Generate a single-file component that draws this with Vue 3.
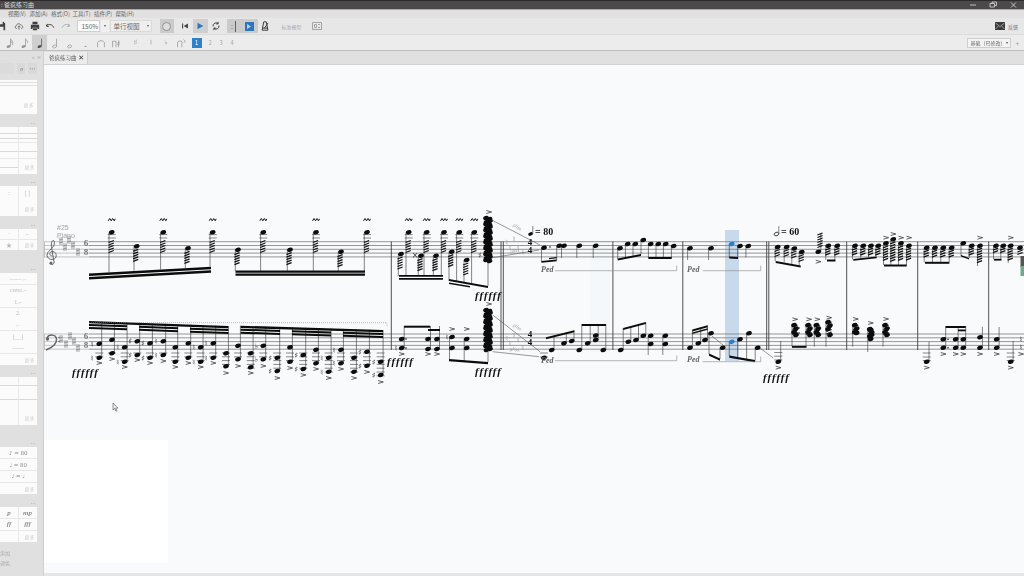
<template>
  <div class="app">
    <header class="titlebar">
      <span class="title">: 爸疯练习曲</span>
      <span class="win-btns">
        <svg viewBox="0 0 60 8" width="60" height="8"><path d="M12 4h6M32 2.500h4.500v3.500h-4.500zM34 2.500v-1.500h4.500v3.500h-2M53 1.500l5 5M58 1.500l-5 5" /></svg>
      </span>
    </header>

    <nav class="menubar">
      <span v-for="m in menus" :key="m" class="menu-item">{{ m }}</span>
    </nav>

    <div class="toolbar tb-main">
      <button class="tb-btn save">
        <svg viewBox="0 0 12 12"><path class="solid" d="M1 1h8l2 2v8H1zM3 1v3h5V1zM3 7v4h6V7z" fill-rule="evenodd" /></svg>
      </button>
      <button class="tb-btn">
        <svg viewBox="0 0 12 12"><path class="line" d="M3.500 9H3C1 9 .8 6 2.800 5.600C3 3 7 2.500 8 4.800C10.500 4.800 11.500 8.500 9 9H8.500M6 10.500V6M4.300 7.500L6 5.800l1.700 1.700" /></svg>
      </button>
      <button class="tb-btn">
        <svg viewBox="0 0 12 12"><path class="solid" d="M3 1h6v3H3zM1 4.500h10v5H9V8H3v1.500H1zM3.500 8.800h5V11h-5z" /></svg>
      </button>
      <button class="tb-btn">
        <svg viewBox="0 0 12 12"><path class="line thick" d="M3 3.500L1.500 6l3 .8M2 5.800C5 3 9 4 10.500 8" /></svg>
      </button>
      <button class="tb-btn off">
        <svg viewBox="0 0 12 12"><path class="line thick" d="M9 3.500L10.500 6l-3 .8M10 5.800C7 3 3 4 1.500 8" /></svg>
      </button>
      <div class="zoom-input">150%</div>
      <div class="zoom-arrow"><i class="caret"></i></div>
      <div class="view-combo"><span>单行视图</span><i class="caret"></i></div>
      <button class="round-btn"><i class="ring"></i></button>
      <button class="tb-btn small skip">
        <svg viewBox="0 0 12 12"><path class="solid" d="M2.500 3h1.300v6H2.500zM9.500 3v6L4.500 6z" /></svg>
      </button>
      <button class="tb-btn play">
        <svg viewBox="0 0 12 12"><path class="blue" d="M3 2l7 4-7 4z" /></svg>
      </button>
      <button class="tb-btn loop">
        <svg viewBox="0 0 12 12"><path class="line thick" d="M2.500 6.500A3.600 3.600 0 0 1 8.500 3.200M9.500 5.500A3.600 3.600 0 0 1 3.500 8.800M8.500 1v2.500H6.300M3.500 11V8.500h2.200" /></svg>
      </button>
      <div class="seg">
        <svg viewBox="0 0 15 13" width="15" height="13"><path class="line" d="M8.500 1v11M5 5v.6M5 8v.6" /></svg>
        <svg viewBox="0 0 15 13" width="15" height="13"><path class="blue" d="M3 2h9v9H3zM5 4v5l4-2.500z" fill-rule="evenodd" /></svg>
      </div>
      <button class="tb-btn small metro">
        <svg viewBox="0 0 12 12"><path class="line thick" d="M4.500 1h3L9.500 11h-7zM3 8.500h6M5.500 8.500L9.500 2.500" /></svg>
      </button>
      <span class="faint-label">标准模型</span>
      <svg class="mixer" viewBox="0 0 10 8" width="10" height="8"><path class="line" d="M.5.500h9v7h-9zM2.500 2.500h2v3h-2zM6 2.500h2M6 5.500h2" /></svg>
      <span class="spacer"></span>
      <svg class="mail" viewBox="0 0 10 8" width="10" height="8"><path d="M0 0h10v8H0z" fill="#3a3a3a" /><path d="M.5 1L5 4.500 9.500 1M.5 7l3-3M9.500 7l-3-3" fill="none" stroke="#ddd" stroke-width=".6" /></svg>
      <span class="feedback">反馈</span>
    </div>

    <div class="toolbar tb-notes">
      <button v-for="(b, i) in noteBtns" :key="i" class="note-btn" :class="{ active: b.active, gap: b.gap }">
        <span v-if="b.text" class="note-glyph">{{ b.text }}</span>
        <svg v-else viewBox="0 0 14 14" width="12" height="12">
          <ellipse v-if="b.head" cx="6.500" cy="11" rx="2.400" ry="1.600" transform="rotate(-20 6.500 11)" :class="b.head" />
          <path v-if="b.d" class="line" :d="b.d" />
        </svg>
      </button>
      <span class="voice on">1</span>
      <span class="voice">2</span>
      <span class="voice">3</span>
      <span class="voice">4</span>
      <span class="spacer"></span>
      <div class="work-combo"><span>基础（已修改）</span><i class="caret"></i></div>
      <span class="plus">+</span>
    </div>

    <main class="body">
      <aside class="palettes">
        <div class="dock-head"><span>⌕ ×</span></div>
        <div class="search-row">
          <div class="search-box"></div>
          <span class="search-btn">⌕</span>
          <span class="search-btn more">···</span>
        </div>
        <template v-for="p in palettes" :key="p.id">
          <div class="pal-head" :style="{ height: p.gap + 'px' }"><span v-if="p.dots">···</span></div>
          <div class="pal-card" :style="{ height: p.h + 'px', gridTemplateColumns: 'repeat(' + p.cols + ', 1fr)' }">
            <div v-for="(c, i) in p.cells" :key="i" class="pal-cell" :class="c.cls">
              <span>{{ c.t }}</span>
            </div>
          </div>
        </template>
        <div class="pal-foot">添加<br />调色</div>
      </aside>

      <section class="workspace">
        <div class="tabs">
          <div class="tab">爸疯练习曲<b>✕</b></div>
        </div>
        <div class="canvas">
          <div class="white-sheet"></div>
          <svg class="score" viewBox="44 65 980 508">
            <rect x="590" y="240" width="20" height="112" fill="#f5f8fa" />
            <rect x="725" y="230" width="14" height="131" fill="#c8d9eb" />

            <g v-for="y in staffLines" :key="y">
              <line x1="44" :y1="y" x2="89" :y2="y" class="staff head-line" />
              <line x1="89" :y1="y" x2="1024" :y2="y" class="staff" />
            </g>
            <path d="M44.500 241.500v16M44.500 334v15.500" class="staff head-line" />

            <line v-for="x in barLines" :key="x" :x1="x" y1="241.500" :x2="x" y2="350" class="bar" />

            <!-- header -->
            <g class="header-sig">
              <path class="clef" d="M52.500 256C50 256 48.800 253.500 50.800 252C54 250.500 57 253 56 257C55 260 49.500 260.500 47.500 257C45.500 252.500 51 250 53.500 246C55 243.500 54.700 240.500 53.200 240.500C51.500 240.800 51 244 51.700 248L54 262C54.300 265 50.500 265.500 49.800 263" />
              <circle cx="51" cy="263" r="1.500" class="clef-dot" />
              <path class="clef bass" d="M47 338C49 334 56 334 56.500 339C57 344 51 348 46 350" />
              <circle cx="47.500" cy="339" r="1.700" class="clef-dot" />
              <circle cx="59" cy="337.500" r=".8" class="clef-dot" />
              <circle cx="59" cy="341.500" r=".8" class="clef-dot" />
              <path v-for="(s, i) in headerSharps" :key="i" class="sharp" :d="sharpPath(s)" />
              <text x="86" y="246" class="time">6</text>
              <text x="86" y="254.500" class="time">8</text>
              <text x="86" y="339" class="time">6</text>
              <text x="86" y="347.500" class="time">8</text>
            </g>
            <text x="57" y="230" class="mark-gray">#25</text>
            <text x="57" y="238" class="mark-gray">Piano</text>

            <line v-for="(l, i) in ledgers" :key="'l' + i" :x1="l[0] - 4" :y1="l[1]" :x2="l[0] + 4" :y2="l[1]" class="ledger" />
            <line v-for="(s, i) in stems" :key="'s' + i" :x1="s[0]" :y1="s[1]" :x2="s[0]" :y2="s[2]" class="stem" />
            <polygon v-for="(b, i) in beams" :key="'b' + i" :points="b" class="beam" />
            <line v-for="(t, i) in tremolos" :key="'t' + i" :x1="t[0] - 2.600" :y1="t[1] + 1" :x2="t[0] + 2.600" :y2="t[1] - 1" class="trem" />
            <ellipse
              v-for="(n, i) in notes"
              :key="'n' + i"
              :cx="n[0]"
              :cy="n[1]"
              rx="2.900"
              ry="2.100"
              :transform="`rotate(-20 ${n[0]} ${n[1]})`"
              :class="n[2] ? 'head-blue' : 'head'"
            />
            <polyline v-for="(a, i) in accents" :key="'a' + i" :points="`${a[0] - 2.600},${a[1] - 1.500} ${a[0] + 2.600},${a[1]} ${a[0] - 2.600},${a[1] + 1.500}`" class="accent" />
            <polyline v-for="(x, i) in trills" :key="'w' + i" :points="`${x - 3.500},220.800 ${x - 2},218.500 ${x - .5},220.800 ${x + 1},218.500 ${x + 2.500},220.800 ${x + 3.500},218.800`" class="trill" />
            <text v-for="(a, i) in accidentals" :key="'c' + i" :x="a[0]" :y="a[1]" class="acc">{{ a[2] }}</text>
            <text v-for="(a, i) in resetNaturals" :key="'r' + i" :x="a[0]" :y="a[1]" class="acc gray">♮</text>
            <circle v-for="(d, i) in dots" :key="'d' + i" :cx="d[0]" :cy="d[1]" r=".8" class="clef-dot dark" />

            <!-- glissando lines and pedal -->
            <path class="thin-line" d="M491.700 220L540 245M492.700 257.700L539 250M492.700 315L540 351.700M492.700 351.700L539 356.700M712 336L723 345M760 348L773.300 358" />
            <path class="pedal-line" d="M555 270.700H676.700V265.500M702.700 270.700H760.700V265.500M555 360.700H676.700V355.500M702.700 361.700H760.700V356.500" />
            <path class="dash-line" d="M89 322.700H387V326.500" />

            <text x="512" y="229" transform="rotate(32 518 228)" class="gliss">gliss.</text>
            <text x="510" y="252" transform="rotate(-9 516 250)" class="gliss">gliss.</text>
            <text x="512" y="329" transform="rotate(32 518 328)" class="gliss">gliss.</text>
            <text x="510" y="351" transform="rotate(6 516 349)" class="gliss">gliss.</text>

            <text x="530" y="245" class="time dark">4</text>
            <text x="530" y="253" class="time dark">4</text>
            <text x="530" y="337" class="time dark">4</text>
            <text x="530" y="345" class="time dark">4</text>

            <!-- tempo -->
            <ellipse cx="530.500" cy="234" rx="2.400" ry="1.700" transform="rotate(-20 530.500 234)" class="head" />
            <line x1="532.800" y1="226" x2="532.800" y2="234" class="stem" />
            <text x="535" y="234.500" class="tempo">= 80</text>
            <ellipse cx="776.500" cy="234" rx="2.400" ry="1.700" transform="rotate(-20 776.500 234)" class="head hollow" />
            <line x1="778.800" y1="226" x2="778.800" y2="234" class="stem" />
            <text x="781" y="234.500" class="tempo">= 60</text>

            <text v-for="(p, i) in pedals" :key="'p' + i" :x="p[0]" :y="p[1]" class="ped">Ped</text>

            <text v-for="(d, i) in dynamics" :key="'f' + i" :x="d[0]" :y="d[1]" class="dyn">ffffff</text>

            <rect x="1020.500" y="256" width="3.500" height="11" fill="#555" />
            <rect x="1020.500" y="266" width="3.500" height="10" fill="#6ea98a" />

            <path class="pointer" d="M113 403v7l1.700-1.500 1.200 2.800 1-.5-1.200-2.700h2.300z" />
          </svg>
        </div>
        <div class="status"></div>
      </section>
    </main>
  </div>
</template>

<script setup>
const menus = ['视图(V)', '添加(A)', '格式(O)', '工具(T)', '插件(P)', '帮助(H)']

const noteBtns = [
  { head: 'fill', d: 'M8.800 2v9M8.800 2c1 2 3 3 2.500 5M8.800 4.500c1 2 3 3 2.500 5' },
  { head: 'fill', d: 'M8.800 2v9M8.800 2c1 2 3 3 2.500 5' },
  { head: 'fill', d: 'M8.800 2v9', active: true },
  { head: 'hollow', d: 'M8.800 2v9' },
  { head: 'hollow' },
  { head: 'dot' },
  { d: 'M3 12V6.500C5 3.500 9 3.500 11 6.500V12' },
  { d: 'M3 12V5M7 12V5M3 5h4M10 4v8M8.500 7l3-1M8.500 9l3-1' },
  { text: '♯', gap: true },
  { text: '♮' },
  { text: '♭' },
  { d: 'M3 12V6c2-2 5-2 5 0v6M10 3l2 2-2 2' }
]

const palettes = [
  { id: 'a', gap: 5, h: 34, cols: 1, cells: [{ t: '更多', cls: 'tall more' }] },
  { id: 'b', gap: 13, dots: true, h: 47, cols: 2, cells: [{ cls: 'staves' }, { cls: 'staves' }, { cls: 'staves' }, { cls: 'staves' }, { cls: 'staves' }, { t: '更多', cls: 'more' }] },
  { id: 'c', gap: 12, dots: true, h: 30, cols: 2, cells: [{ t: ':' }, { t: '[ ]' }, { t: '' }, { t: '更多', cls: 'more' }] },
  { id: 'd', gap: 13, dots: true, h: 21, cols: 2, cells: [{ t: '·' }, { t: '–' }, { t: '★' }, { t: '更多', cls: 'more' }] },
  { id: 'e', gap: 23, dots: true, h: 92, cols: 1, cells: [{ t: '—— ⌐' }, { t: 'cresc.–' }, { t: '1.⌐' }, { t: '2.' }, { t: '⌐' }, { t: '⌊__⌋' }, { t: '——' }, { t: '更多', cls: 'more' }] },
  { id: 'f', gap: 12, dots: true, h: 48, cols: 2, cells: [{ cls: 'staves' }, { cls: 'staves' }, { cls: 'staves' }, { cls: 'staves' }, { t: '' }, { t: '更多', cls: 'more' }] },
  { id: 'g', gap: 22, dots: true, h: 47, cols: 1, cells: [{ t: '♪ = 80', cls: 'dark' }, { t: '♩ = 80', cls: 'dark' }, { t: '♩ = ♩', cls: 'dark' }, { t: '更多', cls: 'more' }] },
  { id: 'h', gap: 13, dots: true, h: 35, cols: 2, cells: [{ t: 'p', cls: 'dyn-cell' }, { t: 'mp', cls: 'dyn-cell' }, { t: 'ff', cls: 'dyn-cell' }, { t: 'fff', cls: 'dyn-cell' }, { t: '' }, { t: '更多', cls: 'more' }] }
]

const staffLines = [241.7, 245.5, 249.3, 253.1, 256.9, 334, 337.8, 341.6, 345.4, 349.2]
const barLines = [391.3, 501, 503.3, 612.9, 682.8, 766.7, 768.8, 846.7, 917.7, 988.7]

const headerSharps = [
  [61, 241], [65, 247], [69, 240], [73, 245], [78, 252],
  [61, 339], [66, 344], [70, 336], [74, 341], [78, 348]
]
const sharpPath = ([x, y]) => `M${x - 1} ${y - 4}v8M${x + 1} ${y - 4}v8M${x - 2} ${y - 1}l4-1M${x - 2} ${y + 2}l4-1`

const resetNaturals = [
  [506.7, 244.5], [510, 250.5], [514.3, 242], [518.3, 251], [522.7, 255],
  [506.7, 341], [510, 346], [514.3, 338], [518.3, 343], [522.7, 351]
]

const notes = []
const stems = []
const beams = []
const tremolos = []
const accents = []
const ledgers = []
const accidentals = []
const dots = []
const trills = []

const beam = (x1, y1, x2, y2, t = 2.4) => {
  beams.push(`${x1},${y1} ${x2},${y2} ${x2},${y2 + t} ${x1},${y1 + t}`)
}
const trem = (x, y1, y2) => {
  for (let y = y1; y <= y2; y += 2.5) tremolos.push([x, y])
}
// ledger lines under the bass staff, down to the note
const lowLedgers = (x, y) => {
  for (let l = 353; l <= y + 1; l += 3.8) ledgers.push([x, l])
}
// tall cluster chord, heads either side of the stem
const cluster = (y1, y2) => {
  let side = 0
  for (let y = y1; y <= y2; y += 3) {
    notes.push([side % 2 ? 490 : 486, y])
    notes.push([side % 2 ? 486.5 : 489.5, y + 1])
    side++
  }
}
cluster(218, 261)
cluster(310, 351)

// top staff, first bar
const line1 = x => 273.5 + (x - 89) * (-6.8 / 122)
beam(89, 273.5, 211, 266.7, 2.6)
beam(89, 277, 211, 270.2, 2.6)
beam(235.5, 270.5, 365, 270.5, 2.2)
beam(235.5, 273.5, 365, 273.5, 2.2)

const highNote = (x, bottom) => {
  notes.push([x, 232.3])
  ledgers.push([x, 234.6], [x, 238])
  stems.push([x - 2.7, 232.5, bottom])
  trem(x - 0.5, 241.5, 253)
  trills.push(x)
}
const lowNote = (x, y, bottom) => {
  notes.push([x, y])
  stems.push([x - 2.7, y, bottom])
  trem(x - 1, y + 4, y + 15)
}
;[111.7, 163.3, 212.7].forEach(x => highNote(x, line1(x)))
;[[136.7, 246.3], [188, 248.3]].forEach(([x, y]) => lowNote(x, y, line1(x)))
;[263.3, 316, 367].forEach(x => highNote(x, 271))
;[[238, 249.7], [290, 249.7], [341, 251.7]].forEach(([x, y]) => lowNote(x, y, 271))

// bass staff, first bar: x, upper, lower, accent, accidentals
const bassBar = [
  [99.3, 343.7, 357.7, 363, '♮'],
  [112, 339.7, 353.3, 359],
  [124.7, 347.3, 361.7, 367, '♮'],
  [137.3, 341.3, 355, 360, '♯'],
  [150, 343.3, 357.7, 363, '♯'],
  [163.3, 341.3, 355, 361, '♮'],
  [175.3, 347.3, 361.7, 367],
  [188.3, 343.3, 357.7, 363],
  [200.7, 347.3, 361.7, 367, '♮'],
  [213.3, 343.3, 357.7, 363, '♮'],
  [226, 353.3, 366.3, 373],
  [238, 345.7, 359.3, 366],
  [250.7, 353.3, 367.3, 373],
  [263.3, 345.7, 359.3, 366, '♭'],
  [277.3, 357.7, 371, 378, '♯'],
  [290, 347.3, 361.7, 368],
  [303.3, 355, 369, 375, '♯'],
  [316, 349.7, 363.3, 369],
  [328.7, 357.7, 371.7, 378, '♮'],
  [341, 349.7, 363.3, 369, '♮'],
  [354, 357.7, 371.7, 378],
  [367, 351.7, 365.7, 372, '♯'],
  [380.7, 361.7, 375, 382, '♯']
]
const beamTop = x => (x < 235 ? 321 + (x - 89) * (5 / 139) : 325.7 + (x - 240.7) * (4.3 / 142.3))
bassBar.forEach(([x, a, b, ac, g]) => {
  notes.push([x, a], [x, b])
  stems.push([x + 2.4, beamTop(x + 2.4), b])
  lowLedgers(x, b)
  accents.push([x, ac])
  if (g) accidentals.push([x - 7, a + 3, g], [x - 7, b + 3, g])
})
// first beam group of 32nds, broken twice
;[[89, 228.4], [240.7, 383]].forEach(([x1, x2]) => beam(x1, beamTop(x1), x2, beamTop(x2), 2.3))
;[[89, 127], [139, 178], [190, 228.4], [240.7, 280], [292, 331], [343, 383]].forEach(([x1, x2]) => {
  beam(x1, beamTop(x1) + 3, x2, beamTop(x2) + 3, 2)
  beam(x1, beamTop(x1) + 6, x2, beamTop(x2) + 6, 2)
})

// second bar, top
;[[408.7, 276], [426.7, 276], [444, 276], [459.3, 281], [474.3, 283]].forEach(([x, b]) => highNote(x, b))
;[[401, 254, 276], [421, 255.7, 276], [436, 255.7, 276], [451.7, 251.7, 281], [466.7, 260, 283]].forEach(([x, y, b]) => {
  notes.push([x, y])
  stems.push([x - 2.7, y, b])
  trem(x - 1, y + 4, Math.min(y + 14, b - 5))
})
accidentals.push([415, 257.5, '×'], [480, 258, '♯'])
beam(399, 275, 443, 275, 1.8)
beam(399, 278, 443, 278, 1.8)
beam(449, 279, 488, 286, 2)
beam(449, 282.5, 470, 286, 1.6)
stems.push([488, 262, 286], [488, 352, 362])
accents.push([489, 212], [489, 304])

// second bar, bass
;[[401.7, 339], [401.7, 348], [428, 339], [428, 349], [437, 339], [437, 349], [452, 337], [452, 348], [466.7, 339], [466.7, 348]].forEach(n => notes.push(n))
stems.push([404.2, 326, 348], [430.5, 326, 349], [439.5, 326, 349], [449.5, 337, 359], [464.2, 339, 361])
beam(404, 325.7, 430, 325.7, 2)
beam(428, 329, 440, 329, 2)
beam(449, 359, 488, 362, 2.2)
accents.push([401.7, 354], [428, 354], [437, 354], [452, 329], [466.7, 329])
accidentals.push([396, 351, '♮'], [447, 340, '♮'])
dots.push([406, 339], [406, 348])

// third bar, top
notes.push([544, 247.7], [559.3, 245.7], [564, 245.7], [579.3, 245.7], [595.7, 245.7])
stems.push([541.5, 248, 262], [556.7, 246, 260], [561.5, 246, 258], [576.8, 246, 258], [593.2, 246, 258])
beam(541.5, 261, 556.7, 259.5, 1.8)
beam(549, 258, 556.7, 257, 1.3)
dots.push([550, 247])

// third bar, bass
notes.push([544, 357.7], [551.7, 350], [564, 343.3], [571.7, 341])
ledgers.push([544, 353], [544, 357])
stems.push([554, 335.5, 350], [566.3, 332.5, 343], [574, 330.3, 341])
beam(546, 337.3, 574.3, 330.3, 2)
notes.push([579.3, 350], [587.7, 343.3], [595.7, 340], [595.7, 335.5], [603.3, 350])
stems.push([581.8, 324.3, 350], [590.2, 324.3, 343], [598.2, 324.3, 340], [605.8, 324.3, 350])
beam(581.8, 324, 606, 324, 2)

// fourth bar
notes.push([620, 248.3], [627.7, 244], [635.3, 244], [643.3, 240])
stems.push([617.7, 248, 259], [625.4, 244, 257.3], [633, 244, 255.8], [641, 240, 254.3])
beam(617.7, 258.5, 641, 254, 2)
notes.push([650.7, 244], [658.3, 244], [665.7, 244], [673.7, 246])
stems.push([648.4, 244, 258], [656, 244, 258], [663.4, 244, 258], [671.4, 246, 258])
beam(648.4, 257, 671.7, 257, 2)
notes.push([620.7, 350], [628.3, 341.7], [636, 340], [643.3, 335.7])
stems.push([623.2, 328, 350], [630.8, 326, 341.7], [638.5, 324.5, 340], [645.8, 322.3, 335.7])
beam(623.2, 328, 645.8, 322, 2)
notes.push([650.7, 335.7], [650.7, 344], [665.3, 335.7], [665.3, 344])
stems.push([648.2, 336, 355], [662.8, 336, 355])

// fifth bar
notes.push([690, 248.3], [711, 248.3], [731.7, 244, true], [740, 246], [748.3, 246])
stems.push([687.6, 248, 260], [708.6, 248, 260], [729.3, 244, 257.5], [737.6, 246, 257.5], [745.9, 246, 257.5])
beam(729.3, 256.5, 738, 257, 2)
notes.push([690, 347.7], [698.3, 343.3], [705, 340], [711, 333.3], [722.7, 347.7], [731.7, 341.7, true], [740, 339.3], [749, 333.3], [757.7, 347.7])
stems.push([692.4, 330, 347.7], [700.7, 327.5, 343.3], [707.5, 325.7, 340], [709, 333.3, 354], [720, 347.7, 359], [729.3, 341.7, 356], [737.6, 339.3, 358], [746.6, 333.3, 359.5], [755.2, 347.7, 360.7])
beam(692.3, 329.5, 707.7, 325.2, 2)
beam(692.3, 332.5, 707.7, 328.2, 1.6)
beam(709, 353.5, 720, 358.5, 2.2)
beam(729.3, 355.5, 755, 360, 2.2)

// sixth bar, top chords with tremolo
const chordNote = (x, y, bottom, tremBottom) => {
  notes.push([x, y])
  stems.push([x - 2.5, y, bottom])
  trem(x - 0.5, y + 3.5, tremBottom)
}
;[[777.7, 247], [786.7, 247], [794.3, 248.5], [801.7, 252]].forEach(([x, y], i) => chordNote(x, y, 261 + i * 1.4, y + 9))
beam(775.7, 261, 800.7, 265.5, 2)
notes.push([818.3, 251.7])
trem(820, 234, 247)
stems.push([820.8, 233, 251.7])
accents.push([818.3, 261.7])
;[828.3, 837.3].forEach(x => chordNote(x, 245.7, 260, 256))
beam(827, 259.5, 835.5, 259.5, 2)

// bass chords of that bar
const bassChord = (x, y1, y2, bottom, acc) => {
  notes.push([x - 1, y1], [x + 1, y1 + 3.5], [x - 1, y1 + 7], [x + 1, y2])
  trem(x, y1 + 1, y2)
  stems.push([x - 3, y1, bottom])
  accents.push([x, acc])
}
bassChord(795, 325, 335, 346.7, 319.3)
bassChord(809, 325, 335, 346.7, 319.3)
bassChord(817.3, 325, 335, 346.7, 319.3)
bassChord(829, 322, 335, 346.7, 317.7)
beam(792, 346, 806.5, 346, 1.8)
dots.push([799, 328], [799, 333])
notes.push([778.3, 361.7])
ledgers.push([778.3, 352.5], [778.3, 356.2], [778.3, 360])
stems.push([780.7, 341, 361.7])
accents.push([778.3, 367.7])

// seventh bar
;[855, 863.3, 871, 878.3].forEach((x, i) => chordNote(x, 245.7, 259.3 - i, 255))
beam(853.3, 259, 876.7, 256.5, 1.8)
const mid = [[886, 243.3], [893.3, 239.3], [901, 243.3], [909, 245.7]]
mid.forEach(([x, y]) => chordNote(x, y, 265, 261))
beam(884, 264.5, 906.7, 264.5, 2)
accents.push([886, 237.7], [893.3, 234], [901, 237.7], [909, 237.7])
bassChord(855.7, 325, 333, 346.7, 319)
notes.push([870.7, 330], [870.7, 339])
bassChord(870.7, 329, 335, 352, 323)
bassChord(886, 325, 335, 346.7, 319)

// eighth bar
;[926.7, 935, 943.3, 951.7].forEach(x => chordNote(x, 247.7, 262.3, 258))
beam(925, 261.8, 949.3, 261.8, 2)
notes.push([963.3, 243.3])
stems.push([961, 243.3, 256])
beam(961, 255, 969, 258, 1.6)
chordNote(971.7, 245.7, 258, 255)
chordNote(980, 245.7, 266, 264)
accents.push([980, 237.7])
notes.push([926.7, 361.7])
ledgers.push([926.7, 353], [926.7, 357], [926.7, 360.5])
stems.push([929, 341.7, 361.7])
accents.push([926.7, 367.7])
;[943.3, 955.7, 963.3].forEach(x => {
  notes.push([x, 339.3], [x, 347.7])
  stems.push([x + 2.4, 326, 347.7])
  accents.push([x, 354])
})
dots.push([948, 339.3], [948, 347.7])
beam(945.7, 326, 965.7, 326, 2)
beam(958, 329.5, 965.7, 329.5, 1.8)
notes.push([980, 337.3], [980, 347.7])
stems.push([982.4, 326.7, 347.7])
accents.push([980, 354])

// ninth bar, cut by the window edge
;[996, 1003.3].forEach(x => chordNote(x, 245.7, 259.3, 254))
chordNote(1010.7, 245.7, 263, 261)
beam(994, 258.8, 1001.5, 258.8, 1.8)
accents.push([1010.7, 237.7])
notes.push([1020, 247.7])
trem(1020, 251, 255)
notes.push([996.7, 339.3], [996.7, 347.7], [1010.7, 361.7])
stems.push([999.1, 327, 347.7], [1013.1, 341, 361.7])
ledgers.push([1010.7, 353], [1010.7, 357], [1010.7, 360.5])
accents.push([996.7, 354], [1010.7, 367.7], [1021, 354])
accidentals.push([1021, 342, '♮'], [1021, 350, '♮'])

const pedals = [[541, 272], [541, 363], [687, 272], [687, 362]]
const dynamics = [[72, 376], [387, 365], [475, 299], [475, 375], [763, 381]]
</script>

<style>
html,
body {
  margin: 0;
  background: #e2e2e2;
}
</style>

<style scoped>
.app {
  width: 1024px;
  height: 576px;
  display: flex;
  flex-direction: column;
  overflow: hidden;
  font-family: "Noto Sans CJK SC", "Liberation Sans", sans-serif;
  font-size: 6.5px;
  color: #666;
  filter: blur(0.3px);
}

.titlebar {
  height: 10px;
  flex: none;
  display: flex;
  align-items: center;
  justify-content: space-between;
  background: #4b4949;
  border-top: 1px solid #2b2b2b;
  border-bottom: 1px solid #a9a9a9;
  box-sizing: border-box;
  color: #d8d8d8;
}

.title {
  padding-left: 1px;
  font-size: 6px;
  line-height: 8px;
}

.win-btns {
  display: flex;
  margin-right: 6px;
}

.win-btns path {
  fill: none;
  stroke: #ddd;
  stroke-width: 0.8;
}

.menubar {
  height: 8px;
  flex: none;
  display: flex;
  align-items: center;
  gap: 5.500px;
  padding-left: 8px;
  background: #e1e1e1;
  font-size: 5.500px;
}

.menu-item {
  width: 16px;
  white-space: nowrap;
}

.toolbar {
  flex: none;
  display: flex;
  align-items: center;
  box-sizing: border-box;
}

.tb-main {
  height: 17px;
  background: #e7e7e8;
  border-bottom: 1px solid #dcdcdc;
}

.tb-notes {
  height: 16px;
  padding-left: 1.500px;
  background: #ececed;
  border-bottom: 1px solid #bdbdbd;
}

button {
  padding: 0;
  border: 0;
  background: none;
  display: flex;
  align-items: center;
  justify-content: center;
}

.tb-btn {
  width: 15.500px;
  height: 14px;
}

.tb-btn svg {
  width: 10px;
  height: 10px;
}

.tb-btn.save {
  margin-left: -7px;
  margin-right: 3px;
}

.tb-btn.off {
  opacity: 0.35;
}

.tb-btn.small {
  width: 12px;
}

.solid {
  fill: #404040;
}

.blue {
  fill: #2c78c0;
}

.line {
  fill: none;
  stroke: #555;
  stroke-width: 0.9;
}

.line.thick {
  stroke: #3c3c3c;
  stroke-width: 1.200;
}

.zoom-input {
  width: 23px;
  height: 12px;
  margin-left: 3px;
  box-sizing: border-box;
  display: flex;
  align-items: center;
  padding-left: 4px;
  background: #fbfbfb;
  border: 1px solid #cfcfcf;
}

.zoom-arrow {
  width: 8px;
  height: 12px;
  margin-left: 1px;
  display: flex;
  align-items: center;
  justify-content: center;
  background: #f0f0f0;
}

.caret {
  width: 0;
  height: 0;
  border-left: 1.500px solid transparent;
  border-right: 1.500px solid transparent;
  border-top: 2px solid #555;
}

.view-combo {
  width: 42px;
  height: 12px;
  margin-left: 1px;
  padding: 0 2px 0 3px;
  box-sizing: border-box;
  display: flex;
  align-items: center;
  justify-content: space-between;
  background: #eeeeee;
  border: 1px solid #dadada;
}

.round-btn {
  width: 14px;
  height: 14px;
  margin-left: 8px;
  background: #cbcbcb;
}

.ring {
  width: 7px;
  height: 7px;
  border: 1px solid #8f8f8f;
  border-radius: 50%;
  background: #dedede;
}

.skip {
  margin-left: 5px;
}

.play {
  width: 15px;
  margin-left: 2px;
  background: #cfcfd0;
}

.loop {
  width: 14px;
  margin-left: 1px;
}

.seg {
  width: 31px;
  height: 14px;
  margin-left: 4px;
  display: flex;
  align-items: center;
  background: #cbcbcb;
  border-radius: 1px;
}

.metro {
  margin-left: 1px;
}

.faint-label {
  margin-left: 11px;
  width: 20px;
  font-size: 5px;
  white-space: nowrap;
  color: #aaa;
}

.mixer {
  margin-left: 10px;
  opacity: 0.5;
}

.spacer {
  flex: 1;
}

.mail {
  margin-right: 3px;
}

.feedback {
  margin-right: 6px;
  font-size: 5px;
}

.note-btn {
  width: 15.300px;
  height: 15px;
  opacity: 0.55;
}

.note-btn.active {
  background: #cfcfcf;
  opacity: 1;
}

.note-btn.gap {
  margin-left: 4px;
}

.note-glyph {
  font-family: "DejaVu Sans", sans-serif;
  font-size: 8px;
  color: #666;
}

.fill {
  fill: #555;
}

.hollow {
  fill: none;
  stroke: #555;
  stroke-width: 0.8;
}

.dot {
  fill: #555;
  transform: scale(0.5);
  transform-origin: 6.500px 11px;
}

.voice {
  width: 11px;
  text-align: center;
  font-size: 6px;
  color: #aaa;
}

.voice.on {
  width: 10px;
  height: 10px;
  margin-left: 2.500px;
  margin-right: 3px;
  line-height: 10px;
  background: #2f80cb;
  color: #fff;
}

.work-combo {
  width: 44px;
  height: 10px;
  padding: 0 2px;
  box-sizing: border-box;
  display: flex;
  align-items: center;
  justify-content: space-between;
  font-size: 5px;
  white-space: nowrap;
  background: #f3f3f3;
  border: 1px solid #cdcdcd;
}

.plus {
  margin: 0 5px 0 4px;
  color: #999;
}

.body {
  flex: 1;
  min-height: 0;
  display: flex;
}

.palettes {
  width: 44px;
  flex: none;
  box-sizing: border-box;
  padding-right: 6.500px;
  background: #e0e0e0;
  border-right: 1px solid #cfcfcf;
}

.dock-head {
  height: 11px;
  margin-right: -5px;
  display: flex;
  justify-content: flex-end;
  align-items: center;
  font-size: 5px;
  color: #999;
}

.search-row {
  height: 13px;
  display: flex;
  align-items: center;
  gap: 3px;
}

.search-box {
  width: 15px;
  height: 11px;
  background: #dbdbdb;
}

.search-btn {
  width: 8px;
  height: 11px;
  line-height: 11px;
  text-align: center;
  background: #d9d9d9;
  font-family: "DejaVu Sans", sans-serif;
  font-size: 6px;
  color: #444;
}

.search-btn.more {
  width: 9px;
}

.pal-head {
  display: flex;
  align-items: flex-end;
  justify-content: flex-end;
  padding-right: 1px;
  font-family: "DejaVu Sans", sans-serif;
  font-size: 5px;
  line-height: 8px;
  color: #777;
}

.pal-card {
  display: grid;
  grid-auto-rows: 1fr;
  gap: 0.500px;
  background: #e8e8e8;
}

.pal-cell {
  display: flex;
  align-items: center;
  justify-content: center;
  background: #fbfbfb;
  font-family: "Liberation Serif", "Noto Sans CJK SC", serif;
  font-size: 6px;
  color: #b9b9b9;
  overflow: hidden;
  white-space: nowrap;
}

.pal-cell.dark {
  font-family: "DejaVu Sans", sans-serif;
  font-size: 5.500px;
  color: #8a8a8a;
}

.pal-cell.dyn-cell {
  font-style: italic;
  font-weight: 700;
  font-size: 7px;
  color: #8f8f8f;
}

.pal-cell.more {
  justify-content: flex-end;
  padding-right: 2px;
  font-family: "Noto Sans CJK SC", sans-serif;
  font-size: 5px;
  color: #d0d0d0;
}

.pal-cell.tall {
  align-items: flex-end;
  padding: 0 3px 6px 0;
  background: linear-gradient(#dedede 0 0) 0 2px / 100% 1px no-repeat, linear-gradient(#dedede 0 0) 0 5px / 100% 1px no-repeat, #fbfbfb;
}

.pal-cell.staves {
  background: repeating-linear-gradient(#fbfbfb 0 2px, #d8d8d8 2px 2.500px), #fbfbfb;
  background-size: 100% 8px;
  background-position: 0 4px;
  background-repeat: no-repeat;
}

.pal-foot {
  margin-top: 6px;
  font-size: 5px;
  line-height: 10px;
  color: #aaa;
}

.workspace {
  flex: 1;
  min-width: 0;
  display: flex;
  flex-direction: column;
}

.tabs {
  height: 14px;
  flex: none;
  display: flex;
  align-items: flex-end;
  background: #e0e0e0;
  border-bottom: 1px solid #d2d2d2;
  box-sizing: border-box;
}

.tab {
  width: 44px;
  height: 12px;
  display: flex;
  align-items: center;
  justify-content: space-between;
  box-sizing: border-box;
  padding: 0 3px 0 5px;
  background: #ececec;
  border-right: 1px solid #cfcfcf;
  font-size: 5.500px;
  white-space: nowrap;
}

.tab b {
  font-family: "DejaVu Sans", sans-serif;
  font-size: 7px;
  color: #333;
}

.canvas {
  flex: 1;
  min-height: 0;
  position: relative;
  background: #f9fafb;
}

.status {
  height: 3px;
  flex: none;
  background: #e6e6e6;
}

.white-sheet {
  position: absolute;
  left: 0;
  top: 375px;
  width: 124px;
  height: 123px;
  background: #fff;
}

.score {
  display: block;
  position: absolute;
  inset: 0;
  width: 980px;
  height: 508px;
}

.staff {
  stroke: #7c7c7c;
  stroke-width: 0.8;
  fill: none;
}

.staff.head-line {
  stroke: #b8b8b8;
}

.bar {
  stroke: #3e3e3e;
  stroke-width: 0.9;
}

.ledger {
  stroke: #555;
  stroke-width: 0.7;
}

.stem {
  stroke: #333;
  stroke-width: 0.6;
}

.beam,
.head {
  fill: #0c0c0c;
}

.head.hollow {
  fill: none;
  stroke: #222;
  stroke-width: 0.8;
}

.head-blue {
  fill: #2a7fc8;
}

.trem {
  stroke: #111;
  stroke-width: 1.300;
}

.accent {
  fill: none;
  stroke: #222;
  stroke-width: 0.7;
}

.trill {
  fill: none;
  stroke: #111;
  stroke-width: 1;
}

.acc {
  font-family: "DejaVu Sans", sans-serif;
  font-size: 8px;
  text-anchor: middle;
  fill: #333;
}

.acc.gray {
  fill: #999;
}

.sharp {
  fill: none;
  stroke: #777;
  stroke-width: 0.6;
}

.clef {
  fill: none;
  stroke: #666;
  stroke-width: 1;
}

.clef.bass {
  stroke-width: 1.500;
}

.clef-dot {
  fill: #666;
}

.clef-dot.dark {
  fill: #111;
}

.time {
  font-family: "Liberation Serif", serif;
  font-weight: 700;
  font-size: 9px;
  text-anchor: middle;
  fill: #777;
}

.time.dark {
  fill: #111;
}

.mark-gray {
  font-family: "Liberation Sans", sans-serif;
  font-size: 7px;
  fill: #a2a2a2;
}

.tempo {
  font-family: "Liberation Serif", serif;
  font-weight: 700;
  font-size: 10px;
  fill: #111;
}

.thin-line {
  fill: none;
  stroke: #555;
  stroke-width: 0.6;
}

.pedal-line {
  fill: none;
  stroke: #8a8a8a;
  stroke-width: 0.6;
}

.dash-line {
  fill: none;
  stroke: #8a8a8a;
  stroke-width: 0.6;
  stroke-dasharray: 1 1;
}

.gliss {
  font-family: "Liberation Serif", serif;
  font-style: italic;
  font-size: 5px;
  fill: #9a9a9a;
}

.ped {
  font-family: "Liberation Serif", serif;
  font-weight: 700;
  font-style: italic;
  font-size: 8px;
  fill: #666;
}

.dyn {
  font-family: "Liberation Serif", serif;
  font-style: italic;
  font-weight: 700;
  font-size: 11px;
  letter-spacing: 1px;
  fill: #111;
}

.pointer {
  fill: #eee;
  stroke: #333;
  stroke-width: 0.5;
}
</style>
